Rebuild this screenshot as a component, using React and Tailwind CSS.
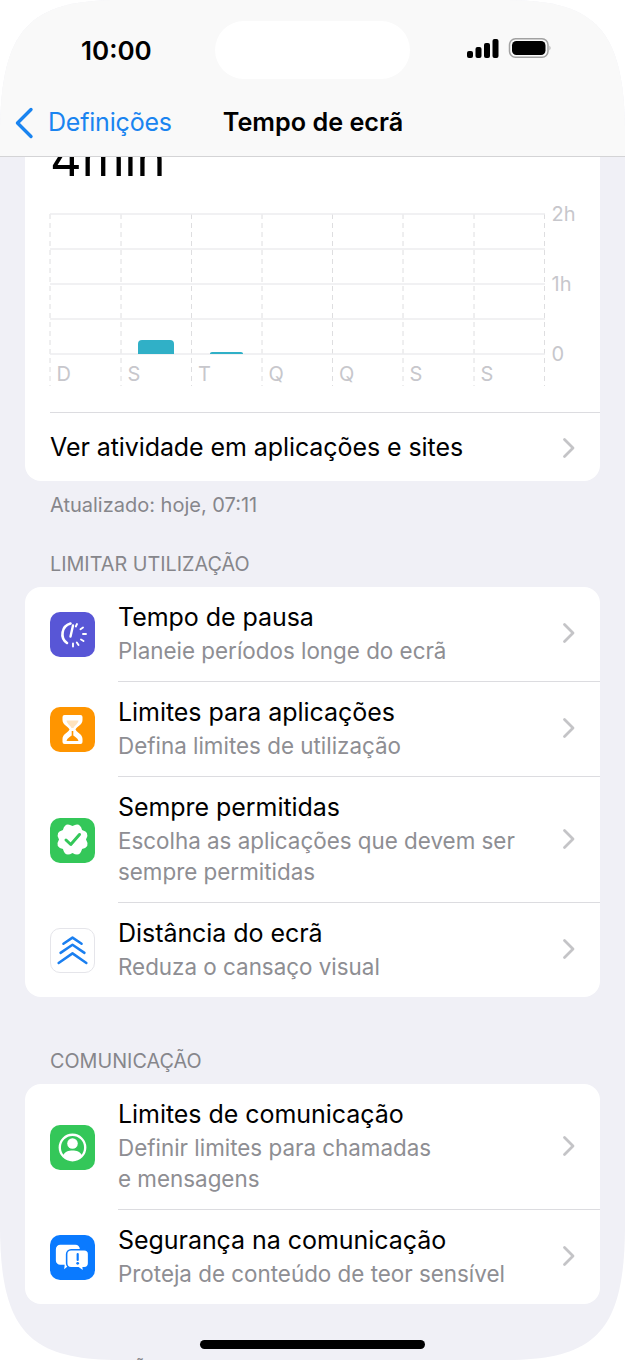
const font = { fontFamily: 'Inter, "Liberation Sans", sans-serif' };

function Chevron() {
  return (
    <svg width="14" height="22" viewBox="0 0 14 22" fill="none" className="shrink-0 relative left-[1px]">
      <path d="M2.5 2.5 L11 11 L2.5 19.5" stroke="#c4c4c7" strokeWidth="2.8" strokeLinecap="round" strokeLinejoin="round" />
    </svg>
  );
}

function IconBox({ bg, children, extra = '' }) {
  return <div className={`w-[45px] h-[45px] rounded-[10px] flex items-center justify-center ${bg} ${extra}`}>{children}</div>;
}

function PauseIcon() {
  return (
    <svg width="45" height="45" viewBox="0 0 45 45" fill="none" stroke="#fff" strokeLinecap="round">
      <path d="M20.500 11.500 A11 11 0 0 0 17 31" strokeWidth="2.600" />
      <path d="M23 13.500 L20.500 24.500" strokeWidth="2.400" />
      <path d="M27 12 L25.800 14.500 M33 15.500 L30.500 17.200 M36 22 L33 22 M33.500 29 L31 27.500 M28.500 33 L26.800 30.500 M23 34.500 L23 31.500" strokeWidth="1.900" />
    </svg>
  );
}

function HourglassIcon() {
  return (
    <svg width="45" height="45" viewBox="0 0 45 45">
      <path fill="#fff" d="M14.500 8 H30.500 A2 2 0 0 1 32.500 10 V13 C32.500 18 26.500 19.500 25.500 22.500 C26.500 25.500 32.500 27 32.500 32 V35 A2 2 0 0 1 30.500 37 H14.500 A2 2 0 0 1 12.500 35 V32 C12.500 27 18.500 25.500 19.500 22.500 C18.500 19.500 12.500 18 12.500 13 V10 A2 2 0 0 1 14.500 8 Z" />
      <path fill="#ffe3bd" d="M16.500 13.500 H28.500 C28 17 24.500 18.500 23.500 21 H21.500 C20.500 18.500 17 17 16.500 13.500 Z" />
      <path fill="#ff9500" d="M21.700 24 H23.300 V28.500 C25 30 27.800 31 28.500 34 H16.500 C17.200 31 20 30 21.700 28.500 Z" />
    </svg>
  );
}

function scallopPath(cx, cy, inner, outer, n) {
  const pt = (r, a) => `${(cx + r * Math.cos(a)).toFixed(2)} ${(cy + r * Math.sin(a)).toFixed(2)}`;
  const step = (Math.PI * 2) / n;
  let d = `M${pt(inner, -Math.PI / 2)}`;
  for (let i = 0; i < n; i++) {
    const a = -Math.PI / 2 + i * step;
    d += ` Q${pt(outer, a + step / 2)} ${pt(inner, a + step)}`;
  }
  return d + ' Z';
}

function BadgeIcon() {
  return (
    <svg width="45" height="45" viewBox="0 0 45 45" fill="none">
      <path fill="#fff" d={scallopPath(22.5, 21.500, 13.500, 19.500, 8)} />
      <path d="M16 22 L20.800 26.500 L29.500 16.500" stroke="#34c759" strokeWidth="3" strokeLinecap="round" strokeLinejoin="round" />
    </svg>
  );
}

function DistanceIcon() {
  return (
    <svg width="45" height="45" viewBox="0 0 45 45" fill="none" stroke="#1a7ff0" strokeWidth="2.600" strokeLinecap="round" strokeLinejoin="round">
      <path d="M13 15.500 L22.500 9 L32 15.500" />
      <path d="M10 25 L22.500 16.500 L35 25" />
      <path d="M8 35.500 L22.500 25.500 L37 35.500" />
    </svg>
  );
}

function PersonIcon() {
  return (
    <svg width="45" height="45" viewBox="0 0 46 46" fill="none">
      <circle cx="23" cy="23" r="13" stroke="#fff" strokeWidth="2.400" />
      <circle cx="23" cy="19" r="5.400" fill="#fff" />
      <path d="M13 31.500 C15 27 19 26 23 26 C27 26 31 27 33 31.500 C30.500 34.500 27 36 23 36 C19 36 15.500 34.500 13 31.500 Z" fill="#fff" />
    </svg>
  );
}

function ChatIcon() {
  return (
    <svg width="45" height="45" viewBox="0 0 46 46">
      <path fill="#fff" d="M10.500 10 H26 A4.500 4.500 0 0 1 30.500 14.500 V26 A4.500 4.500 0 0 1 26 30.500 H20 L14.500 35 L15 30.500 H10.500 A4.500 4.500 0 0 1 6 26 V14.500 A4.500 4.500 0 0 1 10.500 10 Z" />
      <path fill="#fff" stroke="#0a7aff" strokeWidth="1.600" d="M21.500 15 H35 A4.500 4.500 0 0 1 39.500 19.500 V29 A4.500 4.500 0 0 1 35 33.500 H34 L34.500 37.500 L29 33.500 H21.500 A4.500 4.500 0 0 1 17 29 V19.500 A4.500 4.500 0 0 1 21.500 15 Z" />
      <path stroke="#0a7aff" strokeWidth="2.200" strokeLinecap="round" d="M28.300 19.500 V25.500" />
      <circle cx="28.300" cy="29" r="1.400" fill="#0a7aff" />
    </svg>
  );
}

function Row({ icon, title, sub, last }) {
  return (
    <div className="flex">
      <div className="w-[93px] shrink-0 pl-[25px] flex items-center">{icon}</div>
      <div className={`flex-1 flex items-center justify-between pr-[25px] pt-[13px] pb-[15px] ${last ? '' : 'border-b border-[#dcdce0]'}`}>
        <div>
          <div className="text-[25px] leading-[35px] text-black tracking-[-0.05px]">{title}</div>
          <div className="text-[22.400px] leading-[31px] text-[#8e8e93] whitespace-pre-line">{sub}</div>
        </div>
        <Chevron />
      </div>
    </div>
  );
}

function SectionLabel({ children, className }) {
  return <div className={`pl-[50px] text-[19.800px] leading-[24px] text-[#86868b] ${className}`}>{children}</div>;
}

function Chart() {
  const xs = [50, 121, 191.5, 262, 332.5, 403, 474, 544.5];
  const ys = [214, 249, 284, 319, 354];
  const days = ['D', 'S', 'T', 'Q', 'Q', 'S', 'S'];
  return (
    <svg width="575" height="195" viewBox="25 205 575 195" className="block">
      {xs.map((x) => <line key={x} x1={x} x2={x} y1="214" y2="386" stroke="#dedee0" strokeWidth="1" strokeDasharray="5 4" />)}
      {ys.map((y, i) => <line key={y} x1="50" x2="545" y1={y} y2={y} stroke={i % 2 ? '#e3e3e6' : '#ececef'} strokeWidth={i % 2 ? 1 : 1.6} />)}
      <path d="M138 354 V344 Q138 340 142 340 H170 Q174 340 174 344 V354 Z" fill="#30b0c7" />
      <path d="M210 354 V353.500 Q210 352 212 352 H241 Q243 352 243 353.500 V354 Z" fill="#30b0c7" />
      {days.map((d, i) => <text key={i} x={xs[i] + 6.5} y="381" fontSize="20" fill="#c7c7cc" style={font}>{d}</text>)}
      <text x="551.500" y="221" fontSize="20" fill="#c7c7cc" style={font}>2h</text>
      <text x="551.500" y="291" fontSize="20" fill="#c7c7cc" style={font}>1h</text>
      <text x="551.500" y="361" fontSize="20" fill="#c7c7cc" style={font}>0</text>
    </svg>
  );
}

function StatusIcons() {
  return (
    <svg width="86" height="24" viewBox="0 0 86 24" className="block">
      <rect x="0" y="13" width="6" height="7" rx="2" fill="#000" />
      <rect x="8.500" y="9" width="6" height="11" rx="2" fill="#000" />
      <rect x="17" y="5" width="6" height="15" rx="2" fill="#000" />
      <rect x="25.500" y="1" width="6" height="19" rx="2" fill="#000" />
      <rect x="42.500" y="0.800" width="38.500" height="18.500" rx="6" fill="none" stroke="#a2a2a2" strokeWidth="1.500" />
      <rect x="45" y="3" width="33.500" height="14" rx="4.500" fill="#000" />
      <path d="M82.500 7.500 Q84.500 10 82.500 12.500 Z" fill="#a2a2a2" />
    </svg>
  );
}

export default function App() {
  return (
    <div className="relative w-[625px] h-[1360px] bg-white overflow-hidden" style={font}>
      <div className="w-full h-full [clip-path:path('M0_135C0_28_30_0_120_0H505C595_0_625_28_625_135V1225C625_1332_595_1360_505_1360H120C30_1360_0_1332_0_1225Z')] overflow-hidden bg-[#f0f0f6] flex flex-col">
        <header className="h-[157px] shrink-0 bg-[#f9f9f9] border-b border-[#d4d4d6] flex flex-col relative z-10">
          <div className="h-[100px] flex items-center pl-[81px] pr-[72px]">
            <span className="w-[134px] text-[26px] font-semibold text-black">10:00</span>
            <div className="w-[195px] h-[58px] rounded-full bg-white" />
            <div className="ml-auto"><StatusIcons /></div>
          </div>
          <div className="mt-[4px] flex items-center pl-[14px]">
            <svg width="20" height="32" viewBox="0 0 20 32" fill="none" className="shrink-0">
              <path d="M17 2.500 L3.500 16 L17 29.500" stroke="#1a84f0" strokeWidth="3.400" strokeLinecap="round" strokeLinejoin="round" />
            </svg>
            <span className="ml-[14px] text-[25px] text-[#1a84f0] tracking-[-0.2px]">Definições</span>
            <span className="ml-[51px] text-[25.200px] font-semibold text-black">Tempo de ecrã</span>
          </div>
        </header>
        <main className="flex-1 overflow-hidden">
          <section className="mx-[25px] -mt-[60px] bg-white rounded-[16px] pt-[32px]">
            <div className="pl-[25px] text-[49px] leading-[60px] text-black">4min</div>
            <div className="mt-[16px]"><Chart /></div>
            <div className="ml-[25px] mt-[12px] border-t border-[#dcdce0] h-[69px] pt-[2px] flex items-center justify-between pr-[25px]">
              <span className="text-[25px] text-black tracking-[-0.08px]">Ver atividade em aplicações e sites</span>
              <Chevron />
            </div>
          </section>
          <div className="pl-[50px] mt-[12px] text-[20px] leading-[24px] text-[#86868b]">Atualizado: hoje, 07:11</div>
          <SectionLabel className="mt-[35px] mb-[11px]">LIMITAR UTILIZAÇÃO</SectionLabel>
          <section className="mx-[25px] bg-white rounded-[16px] overflow-hidden">
            <Row icon={<IconBox bg="bg-[#5856d6]"><PauseIcon /></IconBox>} title="Tempo de pausa" sub="Planeie períodos longe do ecrã" />
            <Row icon={<IconBox bg="bg-[#ff9500]"><HourglassIcon /></IconBox>} title="Limites para aplicações" sub="Defina limites de utilização" />
            <Row icon={<IconBox bg="bg-[#34c759]"><BadgeIcon /></IconBox>} title="Sempre permitidas" sub={"Escolha as aplicações que devem ser\nsempre permitidas"} />
            <Row icon={<IconBox bg="bg-white" extra="border border-[#e5e5ea]"><DistanceIcon /></IconBox>} title="Distância do ecrã" sub="Reduza o cansaço visual" last />
          </section>
          <SectionLabel className="mt-[52px] mb-[11px]">COMUNICAÇÃO</SectionLabel>
          <section className="mx-[25px] bg-white rounded-[16px] overflow-hidden">
            <Row icon={<IconBox bg="bg-[#34c759]"><PersonIcon /></IconBox>} title="Limites de comunicação" sub={"Definir limites para chamadas\ne mensagens"} />
            <Row icon={<IconBox bg="bg-[#0a7aff]"><ChatIcon /></IconBox>} title="Segurança na comunicação" sub="Proteja de conteúdo de teor sensível" last />
          </section>
          <SectionLabel className="mt-[54px]">RESTRIÇÕES</SectionLabel>
        </main>
      </div>
      <div className="absolute left-[200px] top-[1340px] w-[225px] h-[9px] rounded-full bg-black" />
    </div>
  );
}
